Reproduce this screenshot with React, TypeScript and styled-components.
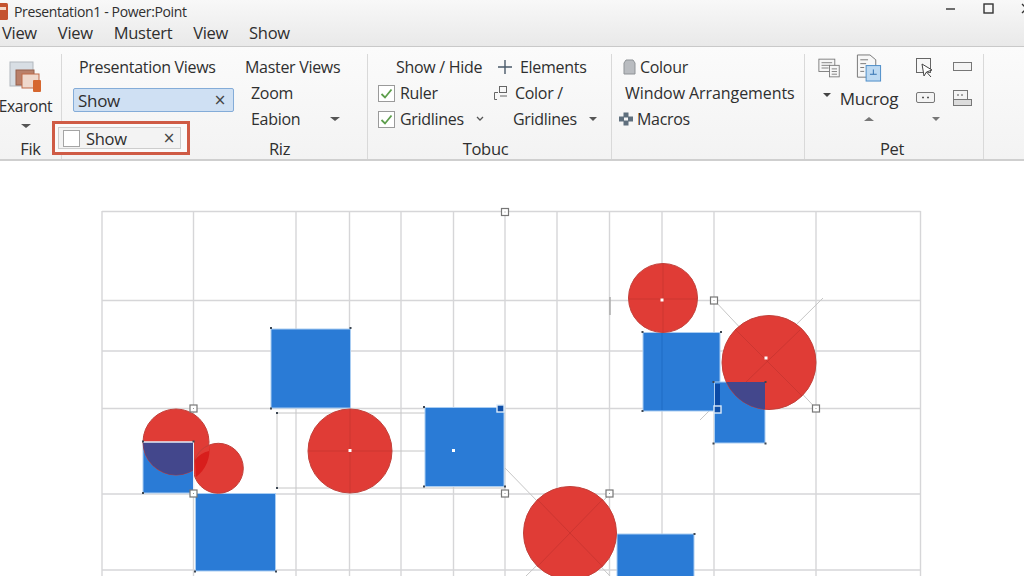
import styled, { createGlobalStyle } from "styled-components";

const Global = createGlobalStyle`
    html, body {
        margin: 0;
        padding: 0;
        background: #fff;
        overflow: hidden;
    }
    body {
        font-family: "Open Sans", "Noto Sans", sans-serif;
        color: #2f2f2f;
    }
`;

const Page = styled.div`
    width: 1024px;
    height: 576px;
    display: flex;
    flex-direction: column;
    overflow: hidden;
`;

const Chrome = styled.header`
    height: 47px;
    flex: none;
    background: linear-gradient(#f8f8f8, #e9e9e9);
    border-bottom: 1px solid #c9c9c9;
    box-sizing: border-box;
`;

const TitleBar = styled.div`
    height: 22px;
    display: flex;
    align-items: center;
    font-size: 14px;
    letter-spacing: -0.35px;
`;

const AppIcon = styled.svg`
    width: 9px;
    height: 20px;
    margin-right: 5px;
    flex: none;
`;

const WindowButtons = styled.div`
    margin-left: auto;
    display: flex;
    align-items: center;
    gap: 27px;
    margin-right: -8px;
    margin-top: -6px;
`;

const TabRow = styled.nav`
    height: 21px;
    display: flex;
    align-items: center;
    gap: 21px;
    padding-left: 2px;
    font-size: 16.5px;
    letter-spacing: -0.3px;
`;

const Ribbon = styled.section`
    position: relative;
    height: 114px;
    flex: none;
    display: flex;
    background: linear-gradient(#fbfbfb, #f3f3f3);
    border-bottom: 2px solid #cfcfcf;
    box-sizing: border-box;
    font-size: 16px;
    letter-spacing: -0.3px;
`;

const Group = styled.div<{ $width: number }>`
    width: ${(p) => p.$width}px;
    flex: none;
    box-sizing: border-box;
    margin-top: 7px;
    display: flex;
    flex-direction: column;
    border-right: 1px solid #d9d9d9;
`;

const GroupBody = styled.div`
    height: 78px;
    flex: none;
`;

const GroupLabel = styled.div<{ $left?: number; $right?: number }>`
    height: 24px;
    margin-top: 5px;
    line-height: 24px;
    text-align: center;
    font-size: 16.5px;
    padding-left: ${(p) => p.$left ?? 0}px;
    padding-right: ${(p) => p.$right ?? 0}px;
`;

const StackedBody = styled(GroupBody)`
    display: flex;
    flex-direction: column;
    align-items: center;
    padding-right: 10px;
    font-size: 15.5px;
    letter-spacing: -0.35px;
`;

const ProductIcon = styled.svg`
    margin: 6px 0 1px;
    flex: none;
`;

const StackCaret = styled.div`
    margin-top: 5px;
    line-height: 0;
`;

const Grid = styled(GroupBody)<{ $cols: string; $left: number }>`
    display: grid;
    grid-template-columns: ${(p) => p.$cols};
    grid-auto-rows: 26px;
    padding-left: ${(p) => p.$left}px;
`;

const Cell = styled.div<{ $left?: number; $gap?: number; $tight?: boolean }>`
    display: flex;
    align-items: center;
    white-space: nowrap;
    padding-left: ${(p) => p.$left ?? 0}px;
    gap: ${(p) => p.$gap ?? 5}px;
    letter-spacing: ${(p) => (p.$tight ? "-0.08px" : "inherit")};
`;

const Field = styled.div`
    height: 24px;
    margin-top: 14px;
    width: 161px;
    box-sizing: border-box;
    background: #cfe0f3;
    border: 1px solid #84acd8;
    border-radius: 2px;
    display: flex;
    align-items: center;
    justify-content: space-between;
    padding: 0 7px 0 4px;
    font-size: 17px;
`;

const Cross = styled.span<{ $push?: boolean }>`
    font-size: 15px;
    color: #444;
    font-family: "DejaVu Sans", sans-serif;
    margin-left: ${(p) => (p.$push ? "auto" : "0")};
`;

const Callout = styled.div`
    position: absolute;
    left: 52px;
    top: 74px;
    width: 138px;
    height: 34px;
    box-sizing: border-box;
    border: 3px solid #cf5b45;
    background: #fafafa;
    padding: 3px 6px 3px 3px;
    z-index: 2;
    font-size: 16.5px;
`;

const CalloutInner = styled.div`
    height: 100%;
    box-sizing: border-box;
    background: #f3f3f3;
    border: 1px solid #cdcdcd;
    display: flex;
    align-items: center;
    padding: 0 5px 0 4px;
`;

const EmptyBox = styled.span`
    width: 17px;
    height: 17px;
    box-sizing: border-box;
    background: #fff;
    border: 1px solid #a5a5a5;
    margin-right: 6px;
`;

const CheckBox = styled.svg`
    width: 17px;
    height: 17px;
    flex: none;
`;

const Chevron = styled.svg`
    margin-left: 6px;
`;

const Caret = styled.span<{ $up?: boolean; $size?: number; $color?: string }>`
    display: inline-block;
    width: 0;
    height: 0;
    border-left: ${(p) => p.$size ?? 5}px solid transparent;
    border-right: ${(p) => p.$size ?? 5}px solid transparent;
    ${(p) => (p.$up ? "border-bottom" : "border-top")}: ${(p) => (p.$size ?? 5) - 0.5}px solid ${(p) => p.$color ?? "#555"};
`;

const IconGrid = styled(GroupBody)`
    display: grid;
    grid-template-columns: 28px 56px 56px 19px;
    grid-template-rows: 28px 32px 10px;
    padding-left: 8px;
`;

const IconCell = styled.div<{ $x?: number; $lift?: number; $big?: boolean }>`
    display: flex;
    align-items: center;
    justify-content: center;
    padding-left: ${(p) => p.$x ?? 0}px;
    padding-bottom: ${(p) => p.$lift ?? 0}px;
    white-space: nowrap;
    font-size: ${(p) => (p.$big ? "17px" : "inherit")};
`;

const Slide = styled.svg`
    display: block;
    width: 1024px;
    height: 415px;
    flex: none;
`;

const Check = () => (
    <CheckBox viewBox="0 0 17 17">
        <rect x="0.5" y="0.5" width="16" height="16" fill="#fff" stroke="#9a9a9a" />
        <path d="M3.5 9 L7 12.5 L13.5 4.5" fill="none" stroke="#5d9e4c" strokeWidth="1.8" />
    </CheckBox>
);

const SLIDE_X = [102, 193.5, 296, 349.5, 401, 453.5, 505, 557, 609.5, 662, 714, 816, 920.5];
const SLIDE_Y = [211.5, 300.5, 351, 408.5, 494, 570];

const BLUE = "#2a7bd6";
const RED = "#e03c36";
const NAVY = "#43478c";

const squares = [
    { x: 271, y: 329, w: 79.5, h: 79 },
    { x: 143, y: 442, w: 50.5, h: 51 },
    { x: 425, y: 407.5, w: 79, h: 79 },
    { x: 195.5, y: 493.5, w: 80, h: 77.5 },
    { x: 643, y: 332.5, w: 77, h: 78.5 },
    { x: 714.5, y: 382, w: 50.5, h: 61 },
    { x: 617, y: 534, w: 77, h: 60 },
];

const circles = [
    { cx: 176, cy: 442, r: 33 },
    { cx: 218.3, cy: 468.3, r: 25 },
    { cx: 350, cy: 451, r: 42 },
    { cx: 663, cy: 298, r: 34.5 },
    { cx: 769, cy: 362.5, r: 47 },
    { cx: 570, cy: 533, r: 46.5 },
];

const handles = [
    [505, 212],
    [193.5, 408.5],
    [193.5, 493.5],
    [505, 493.5],
    [714, 300.5],
    [816, 408.5],
    [609.5, 493.5],
];

const cornerDots = [
    [271, 328], [350.5, 328], [271, 408.5], [143, 441.5], [193.5, 441.5], [143, 493], [277, 413], [277, 488],
    [424, 407], [424, 486.5], [505, 486.5], [195, 571.5], [276, 571.5], [642.5, 332], [721, 332], [642.5, 411],
    [713.5, 382], [765.5, 382], [713.5, 443.5], [765.5, 443.5], [694.5, 534],
];

const centers = [
    [350, 450.5],
    [453.5, 450.5],
    [662, 300],
    [766, 358],
];

const Drawing = () => (
    <Slide viewBox="0 161 1024 415">
        <defs>
            <clipPath id="leftOverlap">
                <rect x={143} y={442} width={50.5} height={51} />
            </clipPath>
            <clipPath id="rightOverlap">
                <rect x={714.5} y={382} width={50.5} height={61} />
            </clipPath>
        </defs>
        <g stroke="#d6d6d8" strokeWidth="1.4">
            {SLIDE_X.map((x) => (
                <line key={x} x1={x} y1={211} x2={x} y2={576} />
            ))}
            {SLIDE_Y.map((y) => (
                <line key={y} x1={102} y1={y} x2={920.5} y2={y} />
            ))}
        </g>
        <g stroke="#c6c6c6" strokeWidth="1" fill="none">
            <path d="M277 413 H505 M277 413 V488 M277 488 H505 M350 451 H425" />
            <path d="M505 468 L610 576 M714 300 L816 408.5 M823 298 L700 420 M610 494 L526 576" />
        </g>
        <path d="M610 297 V315" stroke="#a8a8a8" strokeWidth="1.4" />
        {squares.map((s) => (
            <rect key={s.x} x={s.x} y={s.y} width={s.w} height={s.h} fill={BLUE} stroke="#a9cdf2" strokeWidth="1" />
        ))}
        {circles.map((c) => (
            <circle key={c.cx} cx={c.cx} cy={c.cy} r={c.r} fill={RED} stroke="#c2403a" strokeWidth="1" />
        ))}
        <circle cx={176} cy={442} r={33} fill={NAVY} clipPath="url(#leftOverlap)" />
        <circle cx={769} cy={362.5} r={47} fill={NAVY} clipPath="url(#rightOverlap)" />
        <path d="M193.5 442 V493" stroke="#e4ecf8" strokeWidth="1" />
        <path d="M143 442 H193.5" stroke="#e4ecf8" strokeWidth="1.4" />
        <path d="M209 451 A25 25 0 0 0 195 460 L196 477 A33 33 0 0 0 209 445 Z" fill="#d81e1c" />
        <g stroke="#b02e2a" strokeOpacity="0.4" strokeWidth="1" fill="none">
            <path d="M350 409 V493 M309 451 H392 M663 264 V332 M629 299 H697" />
            <path d="M735 329 L802 396 M800 330 L746 382 M537 499 L603 567 M603 499 L537 567" />
        </g>
        <path d="M662 333 V410" stroke="#1f6cc4" strokeWidth="1" />
        <rect x={715} y={384} width={5} height={24} fill="#0b4aa6" />
        {handles.map(([x, y]) => (
            <g key={`${x}-${y}`}>
                <rect x={x - 3.5} y={y - 3.5} width={7} height={7} fill="#fff" stroke="#777" strokeWidth="1.2" />
                <rect x={x - 0.5} y={y - 0.5} width={1} height={1} fill="#999" />
            </g>
        ))}
        <rect x={497} y={405} width={7} height={7} fill="#0f4fa8" stroke="#dcebf9" strokeWidth="1.4" />
        <rect x={714} y={406} width={7} height={7} fill="#0f4fa8" stroke="#dcebf9" strokeWidth="1.4" />
        {cornerDots.map(([x, y]) => (
            <rect key={`${x}-${y}`} x={x - 1} y={y - 1} width={2} height={2} fill="#3c4652" />
        ))}
        {centers.map(([x, y]) => (
            <rect key={`${x}-${y}`} x={x - 1.5} y={y - 1.5} width={3} height={3} fill="#fff" />
        ))}
    </Slide>
);

const App = () => {
    return (
        <Page>
            <Global />
            <Chrome>
                <TitleBar>
                    <AppIcon viewBox="0 0 9 20">
                        <rect x="-6" y="2" width="14" height="17" rx="1.5" fill="#c4532f" />
                        <rect x="-2" y="6" width="8" height="3" fill="#f4d8c8" />
                    </AppIcon>
                    Presentation1 - Power:Point
                    <WindowButtons>
                        <svg width="10" height="10" viewBox="0 0 10 10">
                            <path d="M0 6 H9" stroke="#333" strokeWidth="1.4" />
                        </svg>
                        <svg width="11" height="11" viewBox="0 0 11 11">
                            <rect x="1" y="1" width="9" height="9" fill="none" stroke="#333" strokeWidth="1.4" />
                        </svg>
                        <svg width="11" height="11" viewBox="0 0 11 11">
                            <path d="M1 1 L10 10 M10 1 L1 10" stroke="#333" strokeWidth="1.3" />
                        </svg>
                    </WindowButtons>
                </TitleBar>
                <TabRow>
                    <span>View</span>
                    <span>View</span>
                    <span>Mustert</span>
                    <span>View</span>
                    <span>Show</span>
                </TabRow>
            </Chrome>
            <Ribbon>
                <Group $width={62}>
                    <StackedBody>
                        <ProductIcon width="34" height="34" viewBox="0 0 34 34">
                            <rect x="1" y="2" width="23" height="24" fill="#d8dee4" stroke="#b2b8be" />
                            <rect x="7" y="10" width="18" height="15" fill="#b9806a" stroke="#96604c" />
                            <rect x="13" y="14" width="17" height="14" fill="#efd8cc" stroke="#c06a48" />
                            <rect x="24" y="20" width="8" height="12" rx="1" fill="#d6672f" />
                        </ProductIcon>
                        <span>Exaront</span>
                        <StackCaret>
                            <Caret />
                        </StackCaret>
                    </StackedBody>
                    <GroupLabel>Fik</GroupLabel>
                </Group>
                <Group $width={306}>
                    <Grid $cols="172px auto" $left={11}>
                        <Cell $left={6}>Presentation Views</Cell>
                        <Cell>Master Views</Cell>
                        <Cell>
                            <Field>
                                Show <Cross>×</Cross>
                            </Field>
                        </Cell>
                        <Cell $left={6}>Zoom</Cell>
                        <div />
                        <Cell $left={6} $gap={30}>
                            Eabion <Caret />
                        </Cell>
                    </Grid>
                    <GroupLabel $left={130}>Riz</GroupLabel>
                </Group>
                <Group $width={244}>
                    <Grid $cols="108px auto" $left={10}>
                        <Cell $left={18}>Show / Hide</Cell>
                        <Cell $left={11} $gap={7}>
                            <svg width="16" height="16" viewBox="0 0 16 16">
                                <path d="M8 1 V15 M1 8 H15" stroke="#4a5a6a" strokeWidth="1.4" />
                            </svg>
                            Elements
                        </Cell>
                        <Cell $gap={5}>
                            <Check /> Ruler
                        </Cell>
                        <Cell $left={7} $gap={6}>
                            <svg width="16" height="16" viewBox="0 0 16 16" fill="none" stroke="#666" strokeWidth="1">
                                <path d="M1.5 7.5 H5 M1.5 7.5 V14.5 H4" />
                                <rect x="6.5" y="1.5" width="7" height="6" />
                                <path d="M7 11 H14" />
                            </svg>
                            Color /
                        </Cell>
                        <Cell $gap={5}>
                            <Check /> Gridlines
                            <Chevron width="10" height="8" viewBox="0 0 10 8">
                                <path d="M2 2 L5 5 L8 2" fill="none" stroke="#555" strokeWidth="1.3" />
                            </Chevron>
                        </Cell>
                        <Cell $left={27} $gap={12}>
                            Gridlines <Caret $size={4.5} />
                        </Cell>
                    </Grid>
                    <GroupLabel $right={8}>Tobuc</GroupLabel>
                </Group>
                <Group $width={193}>
                    <Grid $cols="auto" $left={7}>
                        <Cell $left={4} $gap={4}>
                            <svg width="13" height="16" viewBox="0 0 13 16">
                                <path d="M3 1 H10 L12 4 V15 H1 V4 Z" fill="#b9bcc0" stroke="#8f9397" />
                            </svg>
                            Colour
                        </Cell>
                        <Cell $left={6} $tight>
                            Window Arrangements
                        </Cell>
                        <Cell $gap={4}>
                            <svg width="14" height="14" viewBox="0 0 14 14" fill="#5f6f7d">
                                <rect x="4.5" y="0.5" width="5" height="5" />
                                <rect x="0" y="4.5" width="5" height="5" />
                                <rect x="9" y="4.5" width="5" height="5" />
                                <rect x="4.5" y="8.5" width="5" height="5" />
                            </svg>
                            Macros
                        </Cell>
                    </Grid>
                    <GroupLabel />
                </Group>
                <Group $width={179}>
                    <IconGrid>
                        <IconCell $x={5}>
                            <svg width="26" height="22" viewBox="0 0 26 22" fill="#f7f7f7" stroke="#777">
                                <rect x="1" y="1" width="18" height="14" />
                                <path d="M4 5 H16 M4 8 H14 M4 11 H12" />
                                <rect x="13" y="8" width="11" height="13" />
                                <path d="M15.5 12 H21.5 M15.5 15 H21.5 M15.5 18 H21.5" />
                            </svg>
                        </IconCell>
                        <IconCell>
                            <svg width="26" height="28" viewBox="0 0 26 29" fill="#f7f7f7" stroke="#777">
                                <path d="M1 1 H14 L20 6 V24 H1 Z" />
                                <path d="M4 6 H12 M4 10 H10 M4 14 H8 M4 18 H8" />
                                <rect x="10" y="12" width="15" height="16" fill="#bcd9f2" stroke="#4b8cc8" />
                                <path d="M14 21 H21 M17.5 16 V21" stroke="#2f6fae" />
                            </svg>
                        </IconCell>
                        <IconCell>
                            <svg width="20" height="22" viewBox="0 0 20 22" fill="none" stroke="#666">
                                <rect x="1.5" y="1.5" width="14" height="14" fill="#f7f7f7" />
                                <path d="M7 7 L9 19 L11.5 15 L16 20 M7 7 L17 13 L11.5 15" fill="#fff" stroke="#444" />
                            </svg>
                        </IconCell>
                        <IconCell $lift={4}>
                            <svg width="19" height="9" viewBox="0 0 19 9">
                                <rect x="0.5" y="0.5" width="18" height="8" fill="#f4f4f4" stroke="#777" />
                            </svg>
                        </IconCell>
                        <IconCell $lift={6}>
                            <Caret $size={4.5} $color="#444" />
                        </IconCell>
                        <IconCell $big>Mucrog</IconCell>
                        <IconCell $lift={2}>
                            <svg width="19" height="11" viewBox="0 0 19 11">
                                <rect x="0.5" y="0.5" width="18" height="10" rx="1.5" fill="#f4f4f4" stroke="#777" />
                                <path d="M6 5.5 H8 M11 5.5 H13" stroke="#555" strokeWidth="1.4" />
                            </svg>
                        </IconCell>
                        <IconCell>
                            <svg width="19" height="16" viewBox="0 0 19 16" fill="#f4f4f4" stroke="#777">
                                <rect x="0.5" y="0.5" width="14" height="9" />
                                <rect x="0.5" y="9.5" width="18" height="6" fill="#dcdcdc" />
                                <path d="M4 5 H6 M8 5 H10" stroke="#555" />
                            </svg>
                        </IconCell>
                        <div />
                        <IconCell>
                            <Caret $up $size={5} $color="#777" />
                        </IconCell>
                        <IconCell $x={22}>
                            <Caret $size={4.5} $color="#777" />
                        </IconCell>
                    </IconGrid>
                    <GroupLabel $right={4}>Pet</GroupLabel>
                </Group>
                <Callout>
                    <CalloutInner>
                        <EmptyBox />
                        Show
                        <Cross $push>×</Cross>
                    </CalloutInner>
                </Callout>
            </Ribbon>
            <Drawing />
        </Page>
    );
};

export default App;
